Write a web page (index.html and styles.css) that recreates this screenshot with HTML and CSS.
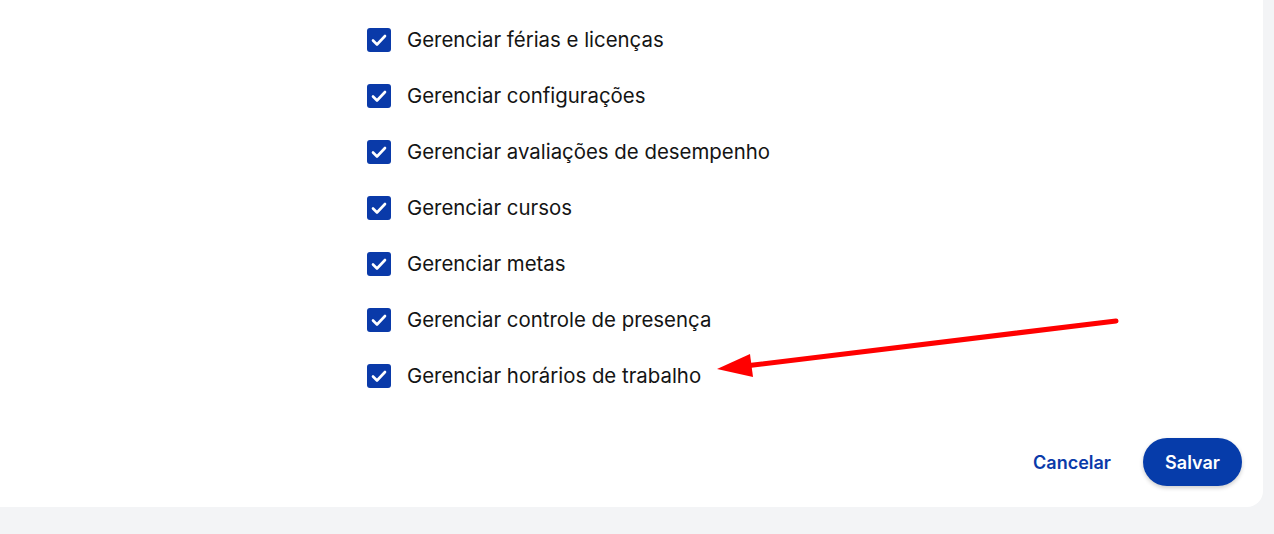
FILE: index.html
```html
<!DOCTYPE html>
<html lang="pt-BR">
<head>
<meta charset="utf-8">
<link rel="stylesheet" href="styles.css">
</head>
<body>
<div class="card">
  <ul class="perm-list">
    <li class="perm"><span class="cb"><svg viewBox="0 0 24 24"><path d="M6 12.5l4 4 8-8.5"/></svg></span><span class="label">Gerenciar férias e licenças</span></li>
    <li class="perm"><span class="cb"><svg viewBox="0 0 24 24"><path d="M6 12.5l4 4 8-8.5"/></svg></span><span class="label">Gerenciar configurações</span></li>
    <li class="perm"><span class="cb"><svg viewBox="0 0 24 24"><path d="M6 12.5l4 4 8-8.5"/></svg></span><span class="label">Gerenciar avaliações de desempenho</span></li>
    <li class="perm"><span class="cb"><svg viewBox="0 0 24 24"><path d="M6 12.5l4 4 8-8.5"/></svg></span><span class="label">Gerenciar cursos</span></li>
    <li class="perm"><span class="cb"><svg viewBox="0 0 24 24"><path d="M6 12.5l4 4 8-8.5"/></svg></span><span class="label">Gerenciar metas</span></li>
    <li class="perm"><span class="cb"><svg viewBox="0 0 24 24"><path d="M6 12.5l4 4 8-8.5"/></svg></span><span class="label">Gerenciar controle de presença</span></li>
    <li class="perm"><span class="cb"><svg viewBox="0 0 24 24"><path d="M6 12.5l4 4 8-8.5"/></svg></span><span class="label">Gerenciar horários de trabalho</span></li>
  </ul>
  <div class="actions">
    <button class="btn-text">Cancelar</button>
    <button class="btn-primary">Salvar</button>
  </div>
</div>
<svg class="arrow" width="1274" height="534" viewBox="0 0 1274 534">
  <line x1="1116" y1="321" x2="745" y2="366" stroke="#ff0000" stroke-width="5" stroke-linecap="round"/>
  <polygon points="717,369 750,354 753,377" fill="#ff0000"/>
</svg>
</body>
</html>
```
FILE: styles.css
```css
* { box-sizing: border-box; }
html, body { margin: 0; padding: 0; }
body {
  background: #f3f4f6;
  font-family: Inter, "Noto Sans", "Liberation Sans", sans-serif;
  width: 1274px;
  height: 534px;
  overflow: hidden;
}
.card {
  background: #ffffff;
  width: 1263px;
  height: 507px;
  border-bottom-right-radius: 16px;
  padding: 12px 21px 21px 367px;
  display: flex;
  flex-direction: column;
}
.perm-list {
  list-style: none;
  margin: 0;
  padding: 0;
}
.perm {
  height: 56px;
  display: flex;
  align-items: center;
  gap: 16px;
}
.cb {
  width: 24px;
  height: 24px;
  border-radius: 3px;
  background: #0a3aa9;
  display: flex;
  align-items: center;
  justify-content: center;
  flex: none;
}
.cb svg {
  width: 24px;
  height: 24px;
  fill: none;
  stroke: #ffffff;
  stroke-width: 2.6;
  stroke-linecap: round;
  stroke-linejoin: round;
}
.label {
  font-size: 20.4px;
  color: #141414;
  padding-bottom: 2px;
}
.actions {
  margin-top: auto;
  display: flex;
  justify-content: flex-end;
  align-items: center;
  gap: 32px;
}
.btn-text {
  background: none;
  border: 0;
  padding: 0;
  font-family: inherit;
  font-size: 18px;
  font-weight: 600;
  color: #0a3aa9;
}
.btn-primary {
  width: 99px;
  height: 48px;
  border: 0;
  border-radius: 24px;
  background: #063caa;
  color: #ffffff;
  font-family: inherit;
  font-size: 18px;
  font-weight: 600;
  box-shadow: 0 2px 4px rgba(0,0,0,0.2);
}
.arrow {
  position: absolute;
  left: 0;
  top: 0;
  pointer-events: none;
}
```
